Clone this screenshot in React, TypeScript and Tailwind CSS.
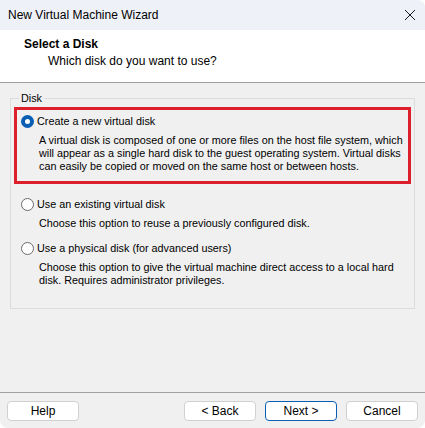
import React, { useState } from 'react';

type DiskOption = {
  id: string;
  label: string;
  lines: string[];
};

const OPTIONS: DiskOption[] = [
  {
    id: 'new',
    label: 'Create a new virtual disk',
    lines: [
      'A virtual disk is composed of one or more files on the host file system, which',
      'will appear as a single hard disk to the guest operating system. Virtual disks',
      'can easily be copied or moved on the same host or between hosts.',
    ],
  },
  {
    id: 'existing',
    label: 'Use an existing virtual disk',
    lines: ['Choose this option to reuse a previously configured disk.'],
  },
  {
    id: 'physical',
    label: 'Use a physical disk (for advanced users)',
    lines: [
      'Choose this option to give the virtual machine direct access to a local hard',
      'disk. Requires administrator privileges.',
    ],
  },
];

const Radio: React.FC<{ checked: boolean }> = ({ checked }) =>
  checked ? (
    <span className="flex h-[13px] w-[13px] shrink-0 items-center justify-center rounded-full bg-[#0a5fb4]">
      <span className="h-[5px] w-[5px] rounded-full bg-white" />
    </span>
  ) : (
    <span className="h-[13px] w-[13px] shrink-0 rounded-full border border-[#6b6b6b] bg-white" />
  );

const WizardButton: React.FC<{ label: string; primary?: boolean }> = ({ label, primary }) => (
  <button
    className={
      primary
        ? 'h-[20px] w-[72px] rounded-[4px] border border-[#0a5fb4] bg-white text-[12px] text-black'
        : 'h-[20px] w-[72px] rounded-[4px] border border-[#d0d0d0] bg-white text-[12px] text-black'
    }
  >
    {label}
  </button>
);

export default function App() {
  const [selected, setSelected] = useState('new');

  return (
    <div className="flex h-[428px] w-[425px] flex-col overflow-hidden rounded-tr-[8px] rounded-b-[8px] bg-[#f0f0f0] font-['Liberation_Sans',Arial,sans-serif] text-black">
      {/* title bar */}
      <div className="flex h-[30px] shrink-0 items-center justify-between bg-[#eef2f8] pl-[8px] pr-[8px]">
        <span className="text-[12px]">New Virtual Machine Wizard</span>
        <svg width="12" height="12" viewBox="0 0 12 12" className="mr-[1px]">
          <path d="M1 1 L11 11 M11 1 L1 11" stroke="#1a1a1a" strokeWidth="1" />
        </svg>
      </div>

      {/* page header */}
      <div className="flex h-[53px] shrink-0 flex-col border-b border-[#a0a0a0] bg-white pt-[7px]">
        <div className="pl-[24px] text-[12px] font-bold leading-[15px]">Select a Disk</div>
        <div className="mt-[2px] pl-[48px] text-[12px] leading-[15px]">Which disk do you want to use?</div>
      </div>

      {/* body */}
      <div className="flex-1 px-[10px] pt-[9px]">
        <fieldset className="border border-[#dcdcdc] px-[3px] pb-[21px] pt-[2px]">
          <legend className="ml-[5px] px-[2px] text-[10.8px] leading-[13px]">Disk</legend>
          {OPTIONS.map((opt, i) => {
            const checked = selected === opt.id;
            return (
              <div
                key={opt.id}
                onClick={() => setSelected(opt.id)}
                className={
                  i === 0
                    ? 'border-[3px] border-[#dc1f2b] pb-[8px] pl-[4px] pt-[4px]'
                    : i === 1
                      ? 'mt-[13px] pl-[7px]'
                      : 'mt-[11px] pl-[7px]'
                }
              >
                <div className="flex h-[14px] items-center gap-[3px]">
                  <Radio checked={checked} />
                  <span className="text-[10.8px] leading-[14px]">{opt.label}</span>
                </div>
                <div className="mt-[6px] whitespace-nowrap pl-[18px] text-[10.8px] leading-[13px]">
                  {opt.lines.map(line => (
                    <div key={line}>{line}</div>
                  ))}
                </div>
              </div>
            );
          })}
        </fieldset>
      </div>

      {/* footer */}
      <div className="flex shrink-0 items-center border-t border-[#a0a0a0] px-[7px] pb-[7px] pt-[8px]">
        <WizardButton label="Help" />
        <div className="flex-1" />
        <div className="flex gap-[9px]">
          <WizardButton label="< Back" />
          <WizardButton label="Next >" primary />
          <WizardButton label="Cancel" />
        </div>
      </div>
    </div>
  );
}
